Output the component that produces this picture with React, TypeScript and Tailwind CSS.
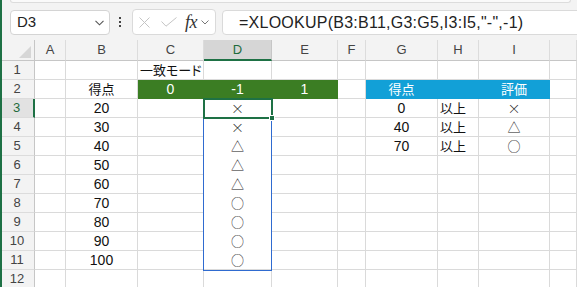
import React from 'react';

type Cell = { t?: string; align?: 'c' | 'l'; fill?: 'g' | 'b'; kind?: 'cjk' | 'sym' };

const COLS = ['A', 'B', 'C', 'D', 'E', 'F', 'G', 'H', 'I', ''];

const n = (t: string): Cell => ({ t, align: 'c' });
const s = (t: string): Cell => ({ t, align: 'c', kind: 'sym' });
const E: Cell = {};

const scores = ['20', '30', '40', '50', '60', '70', '80', '90', '100'];
const marks = ['×', '×', '△', '△', '△', '○', '○', '○', '○'];
const table: Cell[][] = [
  [n('0'), { t: '以上', align: 'l', kind: 'cjk' }, s('×')],
  [n('40'), { t: '以上', align: 'l', kind: 'cjk' }, s('△')],
  [n('70'), { t: '以上', align: 'l', kind: 'cjk' }, s('○')],
];

const rows: Cell[][] = [
  [E, E, { t: '一致モード', align: 'l', kind: 'cjk' }, E, E, E, E, E, E, E],
  [
    E,
    { t: '得点', align: 'c', kind: 'cjk' },
    { t: '0', align: 'c', fill: 'g' },
    { t: '-1', align: 'c', fill: 'g' },
    { t: '1', align: 'c', fill: 'g' },
    E,
    { t: '得点', align: 'c', kind: 'cjk', fill: 'b' },
    { fill: 'b' },
    { t: '評価', align: 'c', kind: 'cjk', fill: 'b' },
    E,
  ],
  ...scores.map((sc, i) => {
    const r: Cell[] = [E, n(sc), E, s(marks[i]), E, E];
    const t = table[i] ?? [E, E, E];
    return [...r, ...t, E];
  }),
  [E, E, E, E, E, E, E, E, E, E],
];

function SheetCell({ c, row, col }: { c: Cell; row: number; col: number }) {
  const inSpill = col === 3 && row >= 3 && row <= 10;
  const border =
    c.fill === 'g'
      ? 'bg-[#3b7d23] border-[#3b7d23] text-white'
      : c.fill === 'b'
      ? 'bg-[#12a0d7] border-[#12a0d7] text-white'
      : inSpill
      ? 'border-r-[#dadada] border-b-white'
      : 'border-[#dadada]';
  const font =
    c.kind === 'cjk'
      ? "font-['Noto_Sans_CJK_JP',sans-serif] text-[13px]"
      : c.kind === 'sym'
      ? "font-['Noto_Sans_CJK_JP',sans-serif] text-[13px] font-light"
      : "font-['Liberation_Sans','Noto_Sans_CJK_JP',sans-serif] text-[14px]";
  return (
    <div
      className={`flex items-center border-r border-b overflow-visible whitespace-nowrap ${border} ${font} ${
        c.align === 'l' ? 'justify-start pl-[2px]' : 'justify-center'
      } ${c.t === '一致モード' ? "[font-feature-settings:'palt']" : ''}`}
    >
      {c.t}
    </div>
  );
}

export default function App() {
  return (
    <div className="relative w-[577px] h-[287px] overflow-hidden bg-white text-[#111]">
      {/* formula bar */}
      <div className="h-[40px] bg-[#f3f3f3] relative">
        <div className="absolute left-[10px] right-[6px] top-0 h-[3px] bg-[#fafafa] rounded-b-[4px] border-b border-x border-[#dcdcdc]" />
        <div className="absolute left-[10px] top-[10px] w-[100px] h-[25px] bg-white border border-[#d4d4d4] rounded-[4px] flex items-center pl-[6px] pr-[5px]">
          <span className="font-['Liberation_Sans',sans-serif] text-[15px] text-[#222]">D3</span>
          <svg className="ml-auto" width="9" height="6" viewBox="0 0 9 6">
            <path d="M0.5 0.8 L4.5 4.8 L8.5 0.8" fill="none" stroke="#555" strokeWidth="1.1" />
          </svg>
        </div>
        <div className="absolute left-[119px] top-[17px] flex flex-col gap-[2px]">
          <span className="w-[2px] h-[2px] bg-[#444]" />
          <span className="w-[2px] h-[2px] bg-[#444]" />
          <span className="w-[2px] h-[2px] bg-[#444]" />
        </div>
        <div className="absolute left-[132px] top-[9px] w-[84px] h-[26px] bg-white border border-[#dadada] rounded-[4px] flex items-center">
          <svg className="ml-[6px]" width="11" height="11" viewBox="0 0 11 11">
            <path d="M0.5 0.5 L10.5 10.5 M10.5 0.5 L0.5 10.5" stroke="#c4c4c4" strokeWidth="1" />
          </svg>
          <svg className="ml-[11px]" width="16" height="10" viewBox="0 0 16 10">
            <path d="M0.5 4.5 L5 9.2 L15.5 0.5" fill="none" stroke="#c4c4c4" strokeWidth="1" />
          </svg>
          <span className="ml-[8px] font-['Liberation_Serif',serif] italic text-[18px] leading-none text-[#333] tracking-[-0.5px]">
            fx
          </span>
          <svg className="ml-[4px]" width="8" height="5" viewBox="0 0 8 5">
            <path d="M0.5 0.5 L4 4 L7.5 0.5" fill="none" stroke="#777" strokeWidth="1" />
          </svg>
        </div>
        <div className="absolute left-[222px] right-[-6px] top-[10px] h-[25px] bg-white border border-[#dadada] rounded-[4px] flex items-center pl-[16px]">
          <span className="font-['Liberation_Sans',sans-serif] text-[16px] tracking-[0.25px] text-[#222] whitespace-nowrap">
            =XLOOKUP(B3:B11,G3:G5,I3:I5,"-",-1)
          </span>
        </div>
      </div>

      {/* sheet */}
      <div className="relative grid grid-cols-[35px_31px_72px_66px_68px_66px_28px_72px_41px_71px_1fr] grid-rows-[21px_repeat(12,19px)]">
        {/* corner */}
        <div className="bg-[#f3f3f3] border-r border-b border-[#c6c6c6] flex items-end justify-end pr-[3px] pb-[2px]">
          <svg width="12" height="12" viewBox="0 0 12 12">
            <path d="M12 0 L12 12 L0 12 Z" fill="#d6d6d6" />
          </svg>
        </div>
        {COLS.map((c, i) =>
          c === 'D' ? (
            <div
              key={i}
              className="bg-[#d6d6d6] border-r border-[#c6c6c6] border-b-2 border-b-[#1e7145] flex items-center justify-center font-['Liberation_Sans',sans-serif] text-[13px] text-[#1e6b3c]"
            >
              {c}
            </div>
          ) : (
            <div
              key={i}
              className="bg-[#f3f3f3] border-r border-b border-r-[#dcdcdc] border-b-[#c6c6c6] flex items-center justify-center font-['Liberation_Sans',sans-serif] text-[13px] text-[#444]"
            >
              {c}
            </div>
          )
        )}
        {rows.map((r, ri) => (
          <React.Fragment key={ri}>
            <div
              className={`flex items-center justify-center border-b font-['Liberation_Sans',sans-serif] text-[13px] ${
                ri === 2
                  ? 'bg-[#e2e2e2] border-r-2 border-r-[#1e7145] border-b-[#dcdcdc] text-[#1e6b3c]'
                  : 'bg-[#f3f3f3] border-r border-r-[#c6c6c6] border-b-[#dcdcdc] text-[#444]'
              }`}
            >
              {ri + 1}
            </div>
            {r.map((c, ci) => (
              <SheetCell key={ci} c={c} row={ri + 1} col={ci} />
            ))}
          </React.Fragment>
        ))}

        {/* spill range outline D3:D11 */}
        <div className="absolute left-[203px] top-[58px] w-[69px] h-[173px] border border-[#2f6bd0] pointer-events-none" />
        {/* active cell D3 */}
        <div className="absolute left-[203px] top-[58px] w-[70px] h-[21px] border-2 border-[#1e7145] pointer-events-none" />
        <div className="absolute left-[269px] top-[75px] w-[6px] h-[6px] bg-[#1e7145] border border-white" />
      </div>

      {/* window edge */}
      <div className="absolute left-0 top-0 bottom-0 w-[2px] bg-[#1e7145]" />
    </div>
  );
}
